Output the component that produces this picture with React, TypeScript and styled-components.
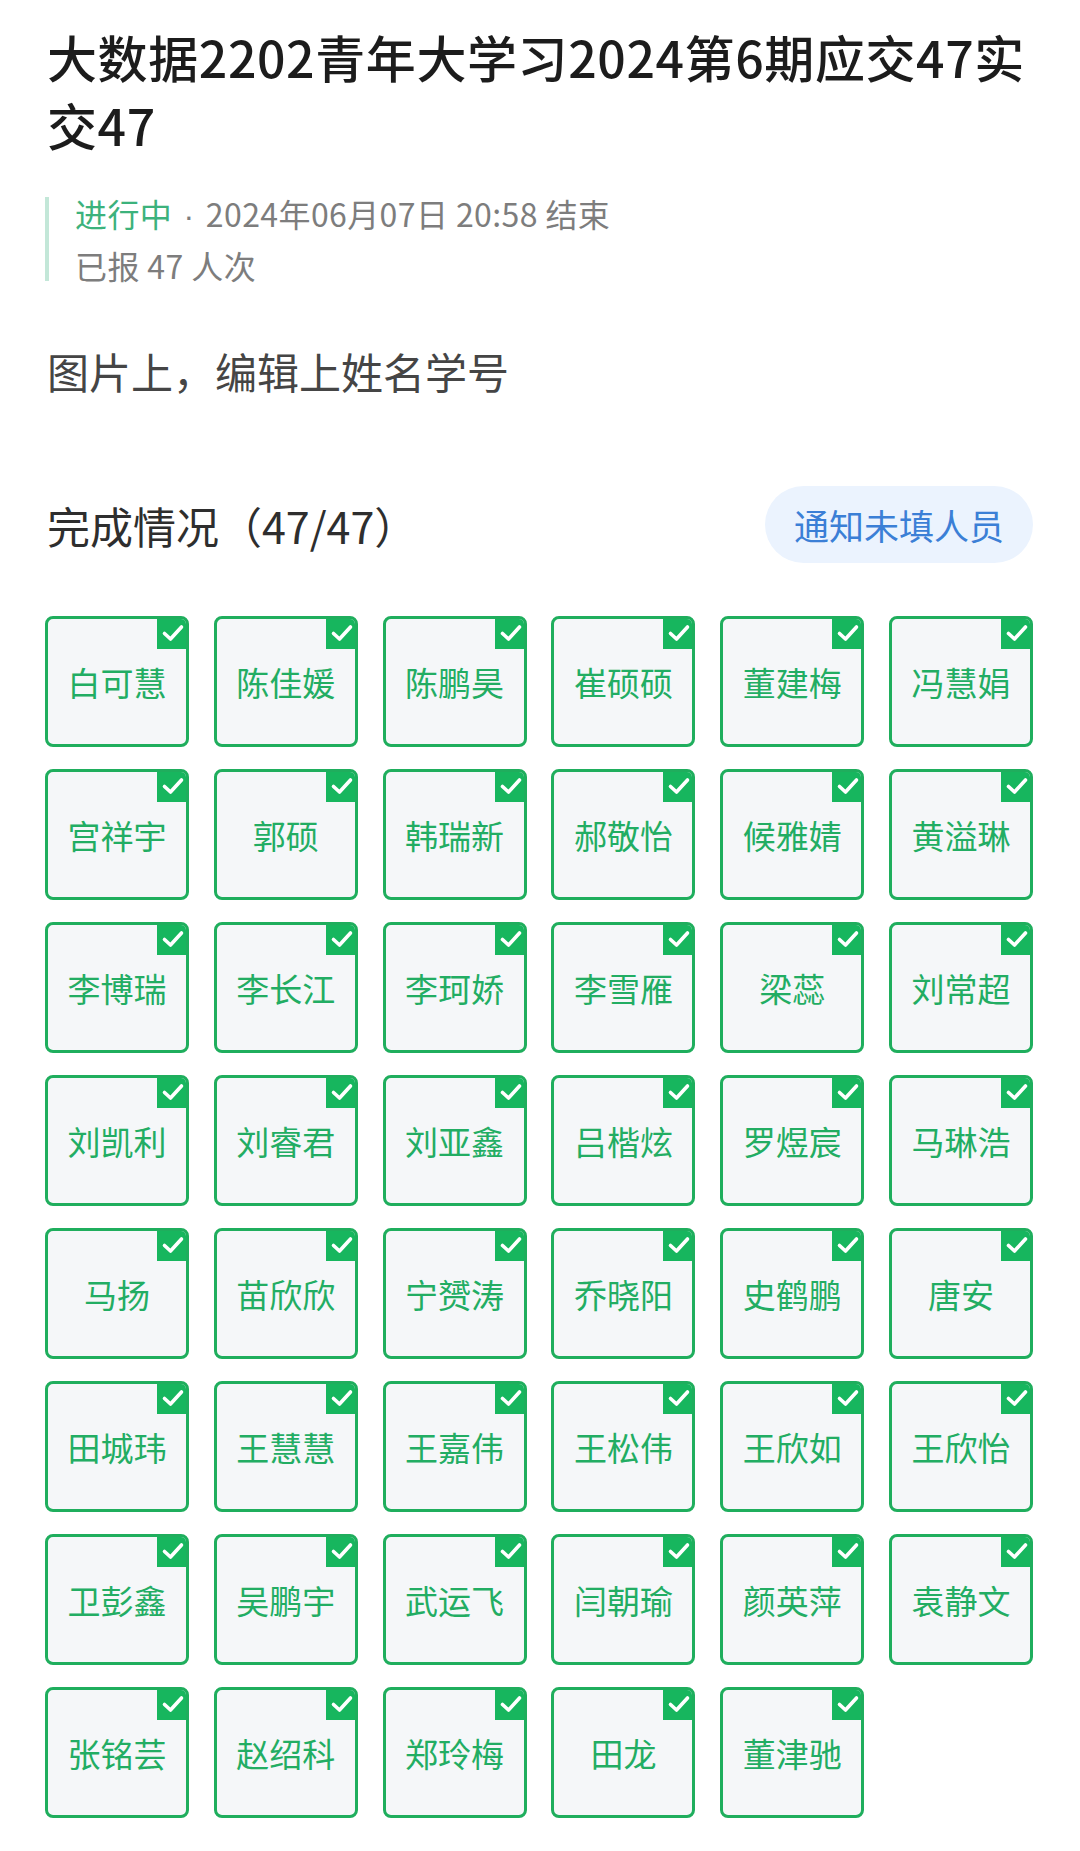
import React from "react";
import styled, { createGlobalStyle } from "styled-components";

const GlobalStyle = createGlobalStyle`
  html, body {
    margin: 0;
    padding: 0;
    background: #ffffff;
  }
  body {
    font-family: "Noto Sans CJK SC", "Noto Sans", sans-serif;
    -webkit-font-smoothing: antialiased;
  }
  * { box-sizing: border-box; }
`;

const Page = styled.div`
  width: 1080px;
  min-height: 1851px;
  padding: 22px 47px 36px 45px;
  display: flex;
  flex-direction: column;
`;

const Title = styled.h1`
  margin: 0 0 0 2px;
  font-size: 50px;
  line-height: 68px;
  font-weight: 500;
  color: #1c1c1c;
  letter-spacing: 0.6px;
`;

const Status = styled.div`
  margin-top: 39px;
  border-left: 4px solid #c3e7d8;
  padding-left: 26px;
  display: flex;
  flex-direction: column;
  gap: 17px;
`;

const StatusLine = styled.div`
  font-size: 32px;
  line-height: 32px;
  color: #7d7d7d;
  letter-spacing: 0.4px;
  white-space: nowrap;
`;

const Live = styled.span`
  color: #3cb27c;
`;

const Dot = styled.span`
  font-family: "Liberation Sans", sans-serif;
  margin: 0 2px;
`;

const Desc = styled.p`
  margin: 65px 0 0 2px;
  font-size: 42px;
  line-height: 50px;
  color: #454545;
`;

const Header = styled.div`
  margin-top: 90px;
  height: 77px;
  display: flex;
  align-items: center;
  justify-content: space-between;
`;

const SectionTitle = styled.h2`
  margin: 0 0 0 2px;
  font-size: 43px;
  font-weight: 400;
  color: #2e2e2e;
`;

const NotifyButton = styled.button`
  height: 77px;
  padding: 0 29px;
  border: none;
  border-radius: 39px;
  background: #ebf3fe;
  color: #3b7fd6;
  font-family: inherit;
  font-size: 35px;
  cursor: pointer;
`;

const Grid = styled.div`
  margin-top: 53px;
  display: grid;
  grid-template-columns: repeat(6, 144px);
  justify-content: space-between;
  row-gap: 22px;
`;

const Card = styled.div`
  position: relative;
  height: 131px;
  border: 3px solid #1fae5d;
  border-radius: 8px;
  background: #f5f7f9;
  display: flex;
  align-items: center;
  justify-content: center;
  overflow: hidden;
`;

const Name = styled.span`
  font-size: 33px;
  color: #22ad63;
  white-space: nowrap;
`;

const Badge = styled.div`
  position: absolute;
  top: -3px;
  right: -3px;
  width: 32px;
  height: 33px;
  background: #17b65e;
  border-top-right-radius: 8px;
  display: flex;
  align-items: center;
  justify-content: center;
`;

const names = [
  "白可慧", "陈佳媛", "陈鹏昊", "崔硕硕", "董建梅", "冯慧娟",
  "宫祥宇", "郭硕", "韩瑞新", "郝敬怡", "候雅婧", "黄溢琳",
  "李博瑞", "李长江", "李珂娇", "李雪雁", "梁蕊", "刘常超",
  "刘凯利", "刘睿君", "刘亚鑫", "吕楷炫", "罗煜宸", "马琳浩",
  "马扬", "苗欣欣", "宁赟涛", "乔晓阳", "史鹤鹏", "唐安",
  "田城玮", "王慧慧", "王嘉伟", "王松伟", "王欣如", "王欣怡",
  "卫彭鑫", "吴鹏宇", "武运飞", "闫朝瑜", "颜英萍", "袁静文",
  "张铭芸", "赵绍科", "郑玲梅", "田龙", "董津驰",
];

const Check = () => (
  <svg width="32" height="33" viewBox="0 0 32 33" fill="none">
    <path
      d="M7.5 17.5 L13.5 23 L24.5 11"
      stroke="#ffffff"
      strokeWidth="3.6"
      strokeLinecap="round"
      strokeLinejoin="round"
    />
  </svg>
);

export default function App() {
  return (
    <>
      <GlobalStyle />
      <Page>
        <Title>大数据2202青年大学习2024第6期应交47实交47</Title>
        <Status>
          <StatusLine>
            <Live>进行中</Live>
            <Dot> · </Dot>2024年06月07日 20:58 结束
          </StatusLine>
          <StatusLine>已报 47 人次</StatusLine>
        </Status>
        <Desc>图片上，编辑上姓名学号</Desc>
        <Header>
          <SectionTitle>完成情况（47/47）</SectionTitle>
          <NotifyButton>通知未填人员</NotifyButton>
        </Header>
        <Grid>
          {names.map((n) => (
            <Card key={n}>
              <Name>{n}</Name>
              <Badge>
                <Check />
              </Badge>
            </Card>
          ))}
        </Grid>
      </Page>
    </>
  );
}
